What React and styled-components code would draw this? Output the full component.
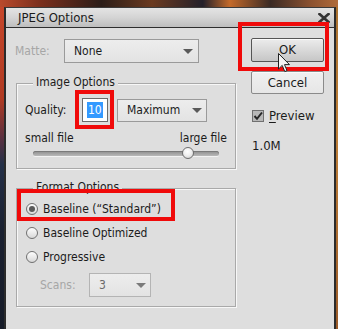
import React from "react";
import styled, { createGlobalStyle } from "styled-components";

const FONT = `"DejaVu Sans Condensed", "DejaVu Sans", "Noto Sans", sans-serif`;

const GlobalStyle = createGlobalStyle`
  html, body { margin: 0; padding: 0; }
  body { width: 338px; height: 329px; overflow: hidden; background: #1c2232; }
  *, *::before, *::after { box-sizing: border-box; }
`;

const Screen = styled.div`
  width: 338px;
  height: 329px;
  overflow: hidden;
  padding: 7px 2px 0 4px;
  font-family: ${FONT};
  font-stretch: semi-condensed;
  font-size: 12px;
  line-height: 14px;
  color: #1b1b1b;
  background:
    linear-gradient(90deg, #b94a2c 0%, #7a2e1c 12%, #2b1d18 30%, #6b3a20 45%, #23202a 60%, #c46a2a 68%, #3a2a24 80%, #8c5230 92%, #b06b3a 100%) top / 100% 7px no-repeat,
    linear-gradient(180deg, #a8702e, #c08038 40%, #9a5a28 100%) right / 2px 100% no-repeat,
    linear-gradient(180deg, #c8482c 0%, #b03a22 30%, #5a3040 42%, #243048 50%, #1a2030 70%, #161b28 100%);
`;

const Dialog = styled.div`
  height: 330px;
  display: flex;
  flex-direction: column;
  border-left: 2px solid #2b2b2b;
  border-right: 2px solid #2b2b2b;
  border-top: 1px solid #3a3a3a;
  background: #dedede;
`;

const TitleBar = styled.div`
  height: 20px;
  flex: none;
  display: flex;
  align-items: center;
  padding: 0 4px 0 12px;
  background: linear-gradient(180deg, #e4e4e4 0%, #d4d4d4 50%, #bebebe 100%);
  border-bottom: 1px solid #2e2e2e;
`;

const Title = styled.span`
  font-size: 13px;
  color: #1a1a1a;
`;

const CloseIcon = styled.svg`
  margin-left: auto;
  display: block;
`;

const Body = styled.div`
  display: flex;
  padding: 10px 0 0 10px;
`;

const LeftCol = styled.div`
  width: 220px;
  display: flex;
  flex-direction: column;
`;

const RightCol = styled.div`
  width: 73px;
  margin-left: 15px;
  display: flex;
  flex-direction: column;
`;

const FieldRow = styled.div`
  display: flex;
  align-items: center;
  height: ${(p) => p.$h || 24}px;
  margin: ${(p) => p.$m || "0"};
  padding-left: ${(p) => p.$pl || 0}px;
`;

const Label = styled.span`
  width: ${(p) => p.$w}px;
  flex: none;
  color: ${(p) => (p.$disabled ? "#a6a6a6" : "#1b1b1b")};
`;

const Select = styled.div`
  width: ${(p) => p.$w}px;
  height: ${(p) => p.$h || 24}px;
  flex: none;
  display: flex;
  align-items: center;
  justify-content: space-between;
  padding: 0 ${(p) => p.$pr || 4}px 0 9px;
  border: 1px solid ${(p) => (p.$disabled ? "#b4b4b4" : "#9a9a9a")};
  background: linear-gradient(180deg, #ededed, #e3e3e3);
  color: ${(p) => (p.$disabled ? "#6a6a6a" : "#1b1b1b")};
`;

const Caret = styled.span`
  width: 0;
  height: 0;
  border-left: 5px solid transparent;
  border-right: 5px solid transparent;
  border-top: 5px solid ${(p) => (p.$disabled ? "#7a7a7a" : "#5a5a5a")};
`;

const Group = styled.div`
  position: relative;
  margin-top: ${(p) => p.$mt}px;
  padding: ${(p) => p.$pt}px 8px 9px 8px;
  border: 1px solid #a9a9a9;
  box-shadow: inset 1px 1px 0 #f7f7f7, 1px 1px 0 #f7f7f7;
`;

const Legend = styled.span`
  position: absolute;
  top: -9px;
  left: 16px;
  padding: 0 3px;
  background: #dedede;
  line-height: 14px;
`;

const Anchor = styled.div`
  position: relative;
  flex: none;
`;

const RedFrame = styled.div`
  position: absolute;
  left: ${(p) => p.$l}px;
  top: ${(p) => p.$t}px;
  width: ${(p) => p.$w}px;
  height: ${(p) => p.$h}px;
  border: 4px solid #f00a0a;
  z-index: 5;
  pointer-events: none;
`;

const NumField = styled.div`
  width: 26px;
  height: 24px;
  padding: 3px 0 0 4px;
  border: 1px solid #6b6b6b;
  background: #ffffff;
`;

const Highlight = styled.span`
  display: inline-block;
  height: 16px;
  line-height: 16px;
  padding: 0 1px;
  background: #3399ff;
  color: #ffffff;
`;

const SliderLabels = styled.div`
  display: flex;
  justify-content: space-between;
  margin-top: 9px;
  line-height: 14px;
`;

const Slider = styled.div`
  position: relative;
  height: 12px;
  margin: 2px 8px 0 8px;
  display: flex;
  align-items: center;
`;

const Track = styled.div`
  width: 100%;
  height: 5px;
  border-radius: 3px;
  background: linear-gradient(180deg, #8c8c8c, #b9b9b9);
  box-shadow: inset 0 1px 0 #7a7a7a, 0 1px 0 #f2f2f2;
`;

const Thumb = styled.div`
  position: absolute;
  top: 0;
  width: 12px;
  height: 12px;
  margin-left: -6px;
  border-radius: 50%;
  border: 1px solid #6e6e6e;
  background: radial-gradient(circle at 45% 35%, #ffffff 0%, #f0f0f0 45%, #c9c9c9 100%);
`;

const RadioRow = styled.label`
  position: relative;
  display: flex;
  align-items: center;
  gap: 5px;
  height: 24px;
  padding-left: 1px;
`;

const Button = styled.div`
  position: relative;
  height: ${(p) => p.$h}px;
  margin-top: ${(p) => p.$mt || 0}px;
  display: flex;
  align-items: center;
  justify-content: center;
  font-size: 13px;
  border: 1px solid ${(p) => (p.$hover ? "#555" : "#8a8a8a")};
  border-radius: 2px;
  background: ${(p) =>
    p.$hover
      ? "linear-gradient(180deg, #ececec 0%, #d9d9d9 50%, #c6c6c6 100%)"
      : "linear-gradient(180deg, #f0f0f0 0%, #e6e6e6 100%)"};
  box-shadow: inset 0 1px 0 #fafafa;
`;

const Cursor = styled.svg`
  position: absolute;
  left: 26px;
  top: 14px;
  z-index: 6;
`;

const CheckRow = styled.div`
  display: flex;
  align-items: center;
  gap: 5px;
  height: 12px;
  margin: 16px 0 0 1px;
  font-size: 13px;
`;

const Underlined = styled.span`
  text-decoration: underline;
  text-underline-offset: 2px;
`;

const SizeText = styled.div`
  margin: 17px 0 0 1px;
  font-size: 13px;
`;

function Radio({ checked }) {
  return (
    <svg width="12" height="12" viewBox="0 0 12 12">
      <defs>
        <linearGradient id={checked ? "rgc" : "rgu"} x1="0" y1="0" x2="0" y2="1">
          <stop offset="0" stopColor="#ffffff" />
          <stop offset="1" stopColor="#d6d6d6" />
        </linearGradient>
      </defs>
      <circle cx="6" cy="6" r="5.5" fill={`url(#${checked ? "rgc" : "rgu"})`} stroke="#6f6f6f" />
      {checked && <circle cx="6" cy="6" r="3" fill="#5a5a5a" />}
    </svg>
  );
}

function Checkbox() {
  return (
    <svg width="12" height="12" viewBox="0 0 12 12">
      <rect x="0.5" y="0.5" width="11" height="11" fill="#b8b8b8" stroke="#707070" />
      <path d="M2.5 6 L5 8.8 L10 2.5" fill="none" stroke="#262626" strokeWidth="2" />
    </svg>
  );
}

const quality = 10;
const maxQuality = 12;

export default function App() {
  return (
    <Screen>
      <GlobalStyle />
      <Dialog>
        <TitleBar>
          <Title>JPEG Options</Title>
          <CloseIcon width="12" height="10" viewBox="0 0 12 10">
            <path d="M1.5 1 L10.5 9 M10.5 1 L1.5 9" stroke="#333" strokeWidth="2.6" strokeLinecap="square" />
          </CloseIcon>
        </TitleBar>
        <Body>
          <LeftCol>
            <FieldRow $m="1px 0 0 -1px">
              <Label $w={49} $disabled>Matte:</Label>
              <Select $w={135} $pr={5}>
                <span>None</span>
                <Caret />
              </Select>
            </FieldRow>

            <Group $mt={20} $pt={14}>
              <Legend>Image Options</Legend>
              <FieldRow>
                <Label $w={57}>Quality:</Label>
                <Anchor>
                  <NumField>
                    <Highlight>{quality}</Highlight>
                  </NumField>
                  <RedFrame $l={-7} $t={-8} $w={39} $h={39} />
                </Anchor>
                <Select $w={90} $h={23} style={{ marginLeft: 9 }}>
                  <span>Maximum</span>
                  <Caret />
                </Select>
              </FieldRow>
              <SliderLabels>
                <span>small file</span>
                <span>large file</span>
              </SliderLabels>
              <Slider>
                <Track />
                <Thumb style={{ left: `${(quality / maxQuality) * 100}%` }} />
              </Slider>
            </Group>

            <Group $mt={19} $pt={8}>
              <Legend>Format Options</Legend>
              <RadioRow>
                <Radio checked />
                <span>Baseline (“Standard”)</span>
                <RedFrame $l={-8} $t={-8} $w={158} $h={32} />
              </RadioRow>
              <RadioRow>
                <Radio />
                <span>Baseline Optimized</span>
              </RadioRow>
              <RadioRow>
                <Radio />
                <span>Progressive</span>
              </RadioRow>
              <FieldRow $m="4px 0 0 0" $pl={15}>
                <Label $w={49} $disabled>Scans:</Label>
                <Select $w={62} $disabled>
                  <span>3</span>
                  <Caret $disabled />
                </Select>
              </FieldRow>
            </Group>
          </LeftCol>

          <RightCol>
            <Button $h={24} $hover>
              OK
              <RedFrame $l={-14} $t={-17} $w={91} $h={49} />
              <Cursor width="13" height="20" viewBox="0 0 13 20">
                <path d="M0.5 0.5 L0.5 16 L4.2 12.4 L6.8 18.6 L9 17.6 L6.5 11.6 L11.5 11.6 Z" fill="#f4f4f4" stroke="#222" strokeWidth="1" strokeLinejoin="round" />
              </Cursor>
            </Button>
            <Button $h={23} $mt={9}>Cancel</Button>
            <CheckRow>
              <Checkbox />
              <span>
                <Underlined>P</Underlined>review
              </span>
            </CheckRow>
            <SizeText>1.0M</SizeText>
          </RightCol>
        </Body>
      </Dialog>
    </Screen>
  );
}
